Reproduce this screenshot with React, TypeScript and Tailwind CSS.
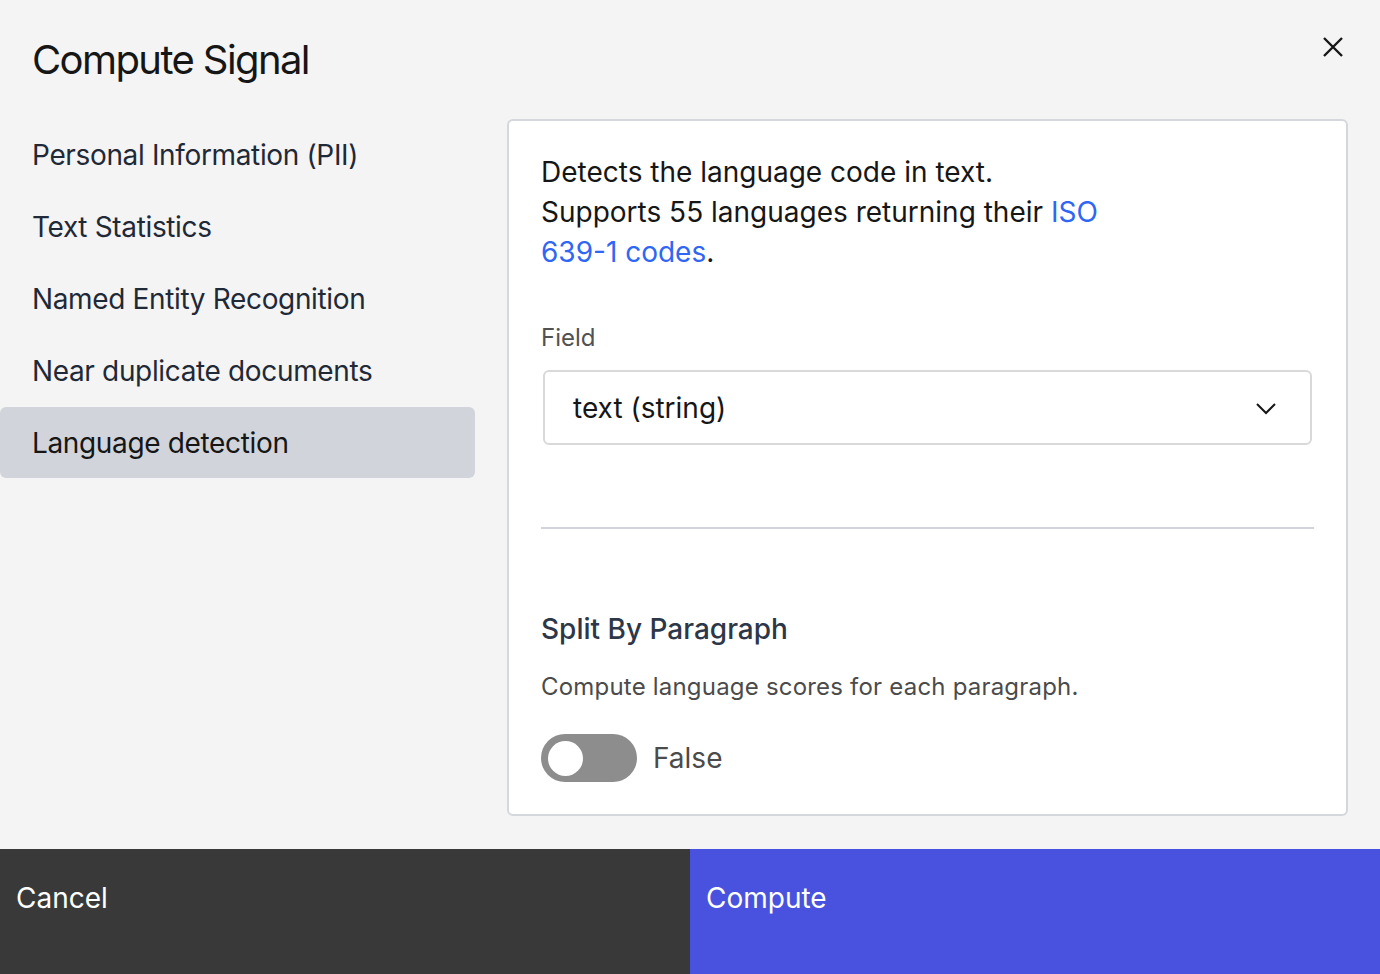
import { useState } from "react";

const signals = [
  "Personal Information (PII)",
  "Text Statistics",
  "Named Entity Recognition",
  "Near duplicate documents",
  "Language detection",
] as const;

function ChevronDown() {
  return (
    <svg width="22" height="22" viewBox="0 0 22 22" fill="none" stroke="#161616" strokeWidth="2">
      <path d="M2 7l9 9 9-9" />
    </svg>
  );
}

function CloseIcon() {
  return (
    <svg width="22" height="22" viewBox="0 0 22 22" fill="none" stroke="#161616" strokeWidth="2.4">
      <path d="M2 2l18 18M20 2L2 20" />
    </svg>
  );
}

export default function App() {
  const [selected, setSelected] = useState<string>("Language detection");
  const [split, setSplit] = useState(false);

  return (
    <div
      className="flex h-[974px] w-[1380px] flex-col overflow-hidden bg-[#f4f4f4] text-[#161616]"
      style={{ fontFamily: "Inter, 'Liberation Sans', sans-serif" }}
    >
      <div className="flex flex-1 flex-col">
        <header className="flex items-start justify-between pl-8 pr-9 pt-[36px]">
          <h1 className="text-[40px] leading-[48px] font-normal tracking-[-1.6px]">Compute Signal</h1>
          <button aria-label="Close">
            <CloseIcon />
          </button>
        </header>

        <div className="mt-[35px] flex flex-1 gap-8 pr-8">
          <nav className="w-[475px] shrink-0">
            <ul className="flex flex-col">
              {signals.map((s) => (
                <li key={s}>
                  <button
                    onClick={() => setSelected(s)}
                    className={
                      s === selected
                        ? "flex h-[71px] w-full items-center rounded-md bg-[#d1d5db] pl-8 text-left text-[28px] tracking-[-0.35px] text-[#161616]"
                        : "flex h-[72px] w-full items-center rounded-md pl-8 text-left text-[28px] tracking-[-0.35px] text-[#1f2937]"
                    }
                  >
                    {s}
                  </button>
                </li>
              ))}
            </ul>
          </nav>

          <section className="mb-[33px] flex h-[697px] flex-1 flex-col rounded-md border-2 border-[#d4d7dc] bg-white px-8 pt-[31px]">
            <p className="max-w-[580px] text-[28px] leading-[40px] text-[#161616]">
              Detects the language code in text.
              <br />
              Supports 55 languages returning their{" "}
              <a href="#" className="text-[#2f66f5]">
                ISO 639-1 codes
              </a>
              .
            </p>

            <label className="mt-[52px] text-[24px] leading-[28px] text-[#525252]">Field</label>
            <div className="mt-[18px] ml-[2px] mr-[2px] flex h-[75px] items-center justify-between rounded-md border-2 border-[#d9d9d9] pl-[28px] pr-[33px]">
              <span className="text-[28px]">text (string)</span>
              <ChevronDown />
            </div>

            <div className="mt-[82px] h-[2px] bg-[#d1d5db]" />

            <h3 className="mt-[82px] text-[28px] leading-[36px] font-medium text-[#2d3748]">Split By Paragraph</h3>
            <p className="mt-[25px] text-[24px] leading-[30px] tracking-[0.2px] text-[#4b4b4b]">
              Compute language scores for each paragraph.
            </p>

            <div className="mt-[32px] flex items-center gap-4">
              <button
                onClick={() => setSplit(!split)}
                className="flex h-[48px] w-[96px] items-center rounded-full bg-[#8d8d8d] px-[7px]"
                aria-label="Split by paragraph"
              >
                <span className="h-[35px] w-[35px] rounded-full bg-white" />
              </button>
              <span className="text-[28px] text-[#4b4b4b]">{split ? "True" : "False"}</span>
            </div>
          </section>
        </div>
      </div>

      <footer className="flex h-[125px] shrink-0">
        <button className="flex flex-1 items-start bg-[#393939] pl-4 pt-[28px] text-left text-[28px] text-white">
          Cancel
        </button>
        <button className="flex flex-1 items-start bg-[#4852df] pl-4 pt-[28px] text-left text-[28px] text-white">
          Compute
        </button>
      </footer>
    </div>
  );
}
